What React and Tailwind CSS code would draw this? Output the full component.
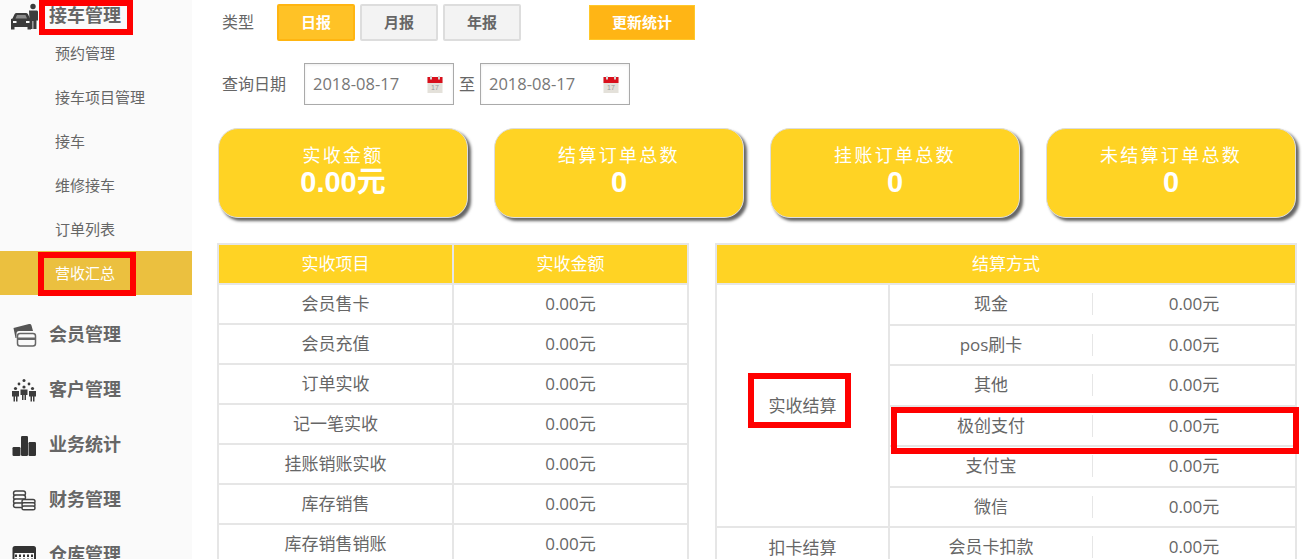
const cjk = { fontFamily: '"Open Sans", "Noto Sans CJK SC", sans-serif' };

const CarIcon = () => (
  <svg width="28" height="28" viewBox="0 0 28 28" fill="#3c3c3c">
    <circle cx="23" cy="4.500" r="2.700" />
    <path d="M19 8.500h8q1 0 1 1.500v8.500h-1.500V27h-3.200v-8h-.8v8h-3v-9z" />
    <path d="M1 17l1.500-.5 2-4.300Q5.200 11 6.500 11h9.500q1.300 0 2 1.200l2 4.300 1 .5v10.500h-3.500V25H4.500v2.500H1z" />
    <path d="M5.500 16.500l1.500-3.500h8.500l1.500 3.500z" fill="#8a8a8a" />
    <rect x="3" y="19" width="3.500" height="2" fill="#fafafa" />
    <rect x="16" y="19" width="3.500" height="2" fill="#fafafa" />
  </svg>
);

const CardIcon = () => (
  <svg width="26" height="26" viewBox="0 0 26 26">
    <path d="M1.500 6 17 2q2-.4 2.500 1.400L21 9H7q-2.500 0-2.500 2.500V16H3.500z" fill="#555" />
    <rect x="5.500" y="11.500" width="18" height="12.500" rx="2.500" fill="#fafafa" stroke="#666" strokeWidth="1.500" />
    <rect x="6" y="15.500" width="17" height="2.500" fill="#666" />
  </svg>
);

const PeopleIcon = () => (
  <svg width="26" height="26" viewBox="0 0 26 26" fill="#3c3c3c">
    <circle cx="12" cy="3.500" r="1.500" />
    <circle cx="7" cy="7" r="1.400" />
    <circle cx="17" cy="7" r="1.400" />
    {[3.500, 12, 20.500].map((x) => (
      <g key={x}>
        <circle cx={x} cy={x === 12 ? 10 : 11.500} r="1.600" />
        <path d={`M${x - 3.500} ${x === 12 ? 12.500 : 14}h7v5.500h-1.500v5h-1.500v-5h-1v5h-1.500v-5H${x - 3.500}z`} />
      </g>
    ))}
  </svg>
);

const BarsIcon = () => (
  <svg width="26" height="26" viewBox="0 0 26 26" fill="#333">
    <rect x="0.500" y="15" width="8" height="9" rx="1.200" />
    <rect x="9" y="4" width="7" height="20" rx="1.200" />
    <rect x="16.500" y="10" width="7.500" height="14" rx="1.200" />
  </svg>
);

const CoinsIcon = () => (
  <svg width="26" height="26" viewBox="0 0 26 26" fill="#fafafa" stroke="#444" strokeWidth="1.400">
    <rect x="1.500" y="4" width="12" height="4.500" rx="2.200" />
    <rect x="1.500" y="8" width="12" height="4.500" rx="2.200" />
    <rect x="1.500" y="12" width="12" height="4.500" rx="2.200" />
    <rect x="1.500" y="16" width="12" height="4.500" rx="2.200" />
    <rect x="10" y="12.500" width="13" height="3.800" rx="1.900" />
    <rect x="10" y="15.800" width="13" height="3.800" rx="1.900" />
    <rect x="10" y="19" width="13" height="3.800" rx="1.900" />
  </svg>
);

const GridIcon = () => (
  <svg width="26" height="26" viewBox="0 0 26 26">
    <rect x="0.500" y="4" width="23.500" height="22" rx="2.500" fill="#333" />
    <rect x="2.500" y="11" width="19.500" height="13" fill="#fafafa" />
    {[4, 8, 12, 16, 20].map((x) =>
      [12.500, 16.500, 20.500].map((y) => <rect key={`${x}-${y}`} x={x - 1} y={y} width="2" height="2.500" fill="#333" />)
    )}
  </svg>
);

const CalendarIcon = () => (
  <svg width="16" height="17" viewBox="0 0 16 17" className="shrink-0">
    <rect x="0.500" y="1" width="15" height="16" fill="#e4e1da" />
    <rect x="0.500" y="1" width="15" height="6" fill="#d9101c" />
    <rect x="3" y="0" width="2" height="3.500" fill="#d8d8d8" />
    <rect x="11" y="0" width="2" height="3.500" fill="#d8d8d8" />
    <text x="4" y="14" fontSize="7" fill="#9a9a9a" fontFamily="Liberation Sans">17</text>
  </svg>
);

const subItems = ['预约管理', '接车项目管理', '接车', '维修接车', '订单列表', '营收汇总'];
const groups = [
  ['会员管理', CardIcon],
  ['客户管理', PeopleIcon],
  ['业务统计', BarsIcon],
  ['财务管理', CoinsIcon],
  ['仓库管理', GridIcon],
];

const stats = [
  ['实收金额', '0.00元'],
  ['结算订单总数', '0'],
  ['挂账订单总数', '0'],
  ['未结算订单总数', '0'],
];

const leftRows = ['会员售卡', '会员充值', '订单实收', '记一笔实收', '挂账销账实收', '库存销售', '库存销售销账'];
const rightRows = ['现金', 'pos刷卡', '其他', '极创支付', '支付宝', '微信'];

const Sidebar = () => (
  <aside className="w-[192px] shrink-0 bg-[#fafafa] h-[559px] overflow-hidden">
    <div className="flex items-center h-[31px] pl-[10px] text-[18px] font-bold text-[#666]">
      <span className="w-[39px] flex"><CarIcon /></span>
      接车管理
    </div>
    {subItems.map((item) => (
      <div
        key={item}
        className={`h-[44px] flex items-center pl-[55px] text-[15px] ${item === '营收汇总' ? 'bg-[#ebc03f] text-white' : 'text-[#666]'}`}
      >
        {item}
      </div>
    ))}
    <div className="mt-[12px]">
      {groups.map(([name, Icon]) => (
        <div key={name} className="flex items-center h-[55px] pl-[12px] text-[18px] font-bold text-[#666]">
          <span className="w-[37px] flex"><Icon /></span>
          {name}
        </div>
      ))}
    </div>
  </aside>
);

const DateInput = () => (
  <div className="w-[150px] h-[42px] border border-[#aaa] flex items-center justify-between pl-[8px] pr-[10px] text-[16.500px] text-[#777] bg-white shadow-[inset_0_1px_3px_rgba(0,0,0,0.08)]">
    2018-08-17
    <CalendarIcon />
  </div>
);

const Toolbar = () => (
  <>
    <div className="flex items-center h-[37px] ml-[4px] text-[#666]">
      <span className="w-[55px] text-[16px] -mt-[2px]">类型</span>
      <div className="flex gap-[5px]">
        <button className="w-[78px] h-[37px] rounded-[2px] border-2 border-[#ffb511] bg-[#ffc226] text-white text-[15px] font-bold">日报</button>
        <button className="w-[78px] h-[37px] rounded-[2px] border-2 border-[#ddd] bg-[#f3f3f3] text-[#666] text-[15px] font-bold">月报</button>
        <button className="w-[78px] h-[37px] rounded-[2px] border-2 border-[#ddd] bg-[#f3f3f3] text-[#666] text-[15px] font-bold">年报</button>
      </div>
      <button className="ml-[68px] w-[106px] h-[35px] border border-[#ffc82a] bg-[#ffb515] text-white text-[15px] font-bold">更新统计</button>
    </div>
    <div className="flex items-center mt-[22px] ml-[4px] text-[16px] text-[#666]">
      <span className="w-[82px]">查询日期</span>
      <DateInput />
      <span className="w-[26px] text-center">至</span>
      <DateInput />
    </div>
  </>
);

const StatCards = () => (
  <div className="flex gap-[26px] mt-[23px]">
    {stats.map(([label, value]) => (
      <div
        key={label}
        className="w-[250px] h-[90px] rounded-[20px] border border-[#ddd] bg-[#ffd324] text-white flex flex-col items-center pt-[14px] shadow-[3px_3px_3px_#666]"
      >
        <div className="text-[18px] leading-[24px] tracking-[2.300px]">{label}</div>
        <div className="text-[29px] leading-[30px] font-bold" style={{ fontFamily: '"Liberation Sans", "Noto Sans CJK SC", sans-serif' }}>{value}</div>
      </div>
    ))}
  </div>
);

const LeftTable = () => (
  <table className="w-[472px] table-fixed border-collapse text-[17px] text-[#666] text-center">
    <thead>
      <tr className="h-[40px] bg-[#ffd324] text-white">
        <th className="border-2 border-[#e6e6e6] font-normal w-[235px]">实收项目</th>
        <th className="border-2 border-[#e6e6e6] font-normal">实收金额</th>
      </tr>
    </thead>
    <tbody>
      {leftRows.map((name) => (
        <tr key={name} className="h-[40px]">
          <td className="border-2 border-[#e6e6e6]">{name}</td>
          <td className="border-2 border-[#e6e6e6]">0.00元</td>
        </tr>
      ))}
    </tbody>
  </table>
);

const PayCell = ({ name }) => (
  <td className="border-2 border-[#e6e6e6]">
    <div className="flex items-center">
      <span className="w-[203px] h-[22px] leading-[22px] border-r border-[#e6e6e6]">{name}</span>
      <span className="flex-1 h-[22px] leading-[22px]">0.00元</span>
    </div>
  </td>
);

const RightTable = () => (
  <table className="w-[582px] table-fixed border-collapse text-[17px] text-[#666] text-center">
    <colgroup>
      <col className="w-[173px]" />
      <col />
    </colgroup>
    <thead>
      <tr className="h-[40px] bg-[#ffd324] text-white">
        <th colSpan={2} className="border-2 border-[#e6e6e6] font-normal">结算方式</th>
      </tr>
    </thead>
    <tbody>
      {rightRows.map((name, i) => (
        <tr key={name} className="h-[40.500px]">
          {i === 0 && <td rowSpan={6} className="border-2 border-[#e6e6e6]">实收结算</td>}
          <PayCell name={name} />
        </tr>
      ))}
      <tr className="h-[40.500px]">
        <td className="border-2 border-[#e6e6e6]">扣卡结算</td>
        <PayCell name="会员卡扣款" />
      </tr>
    </tbody>
  </table>
);

// the red rectangles someone drew over the screenshot
const marks = [
  'left-[39px] top-0 w-[94px] h-[35px]',
  'left-[38px] top-[252px] w-[98px] h-[44px]',
  'left-[748px] top-[373px] w-[103px] h-[55px]',
  'left-[891px] top-[407px] w-[408px] h-[47px]',
];

const App = () => (
  <div className="relative flex w-[1312px] h-[559px] overflow-hidden bg-white" style={cjk}>
    <Sidebar />
    <main className="flex-1 pl-[26px] pt-[4px]">
      <Toolbar />
      <StatCards />
      <div className="flex items-start gap-[26px] mt-[25px] -ml-[1px]">
        <LeftTable />
        <RightTable />
      </div>
    </main>
    {marks.map((m) => (
      <div key={m} className={`absolute border-[6px] border-[#ff0000] ${m}`} />
    ))}
  </div>
);

export default App;
